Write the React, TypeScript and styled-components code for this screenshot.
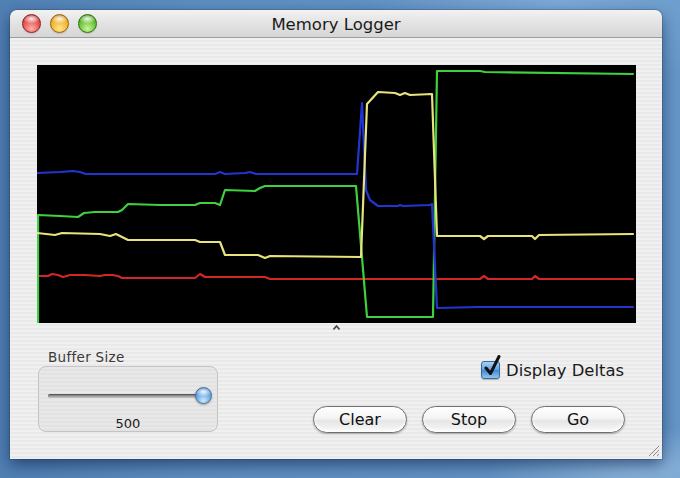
import React from "react";
import styled, { createGlobalStyle } from "styled-components";

const GlobalStyle = createGlobalStyle`
  html, body { margin: 0; padding: 0; }
  body {
    font-family: "DejaVu Sans", "Liberation Sans", sans-serif;
    background: #5f8fc1;
  }
`;

const Desktop = styled.div`
  position: relative;
  width: 680px;
  height: 478px;
  overflow: hidden;
  box-sizing: border-box;
  padding: 10px 18px 0 10px;
  background:
    radial-gradient(ellipse 220px 60px at 640px 470px, rgba(170, 205, 235, 0.55), rgba(170, 205, 235, 0) 70%),
    radial-gradient(ellipse 260px 120px at 560px 0px, rgba(140, 185, 228, 0.6), rgba(140, 185, 228, 0) 75%),
    linear-gradient(90deg, #5080b4 0%, #5e8ec0 30%, #6596c7 100%);
`;

const Window = styled.div`
  position: relative;
  width: 652px;
  height: 449px;
  display: flex;
  flex-direction: column;
  border-radius: 7px 7px 0 0;
  overflow: hidden;
  box-shadow: 0 6px 16px rgba(0, 20, 60, 0.55), 0 0 0 1px rgba(40, 60, 90, 0.25);
`;

const TitleBar = styled.div`
  height: 27px;
  flex: none;
  display: grid;
  grid-template-columns: 1fr auto 1fr;
  align-items: center;
  background: linear-gradient(180deg, #f2f2f2 0%, #e4e4e4 45%, #d6d6d6 100%);
  border-bottom: 1px solid #9c9c9c;
`;

const Lights = styled.div`
  display: flex;
  gap: 9px;
  align-items: center;
  padding-left: 12px;
`;

const Light = styled.div<{ $base: string; $dark: string; $hi: string }>`
  width: 19px;
  height: 19px;
  border-radius: 50%;
  box-sizing: border-box;
  border: 1px solid ${(p) => p.$dark};
  background:
    radial-gradient(ellipse 9px 5px at 50% 22%, rgba(255, 255, 255, 0.9), rgba(255, 255, 255, 0) 100%),
    radial-gradient(circle at 50% 80%, ${(p) => p.$hi} 0%, ${(p) => p.$base} 60%, ${(p) => p.$dark} 100%);
  box-shadow: 0 1px 1px rgba(0, 0, 0, 0.15);
`;

const Title = styled.div`
  font-size: 16.5px;
  color: #1a1a1a;
  padding-top: 1px;
`;

const Body = styled.div`
  flex: 1;
  display: flex;
  flex-direction: column;
  padding: 27px 26px 0 27px;
  background: repeating-linear-gradient(
    180deg,
    #f0f0f0 0px,
    #f0f0f0 2px,
    #e9e9e9 2px,
    #e9e9e9 4px
  );
`;

const Chart = styled.svg`
  display: block;
  width: 599px;
  height: 258px;
  background: #000;
  flex: none;
`;

const Handle = styled.div`
  height: 22px;
  display: flex;
  justify-content: center;
  padding-top: 2px;
  box-sizing: border-box;
`;

const Controls = styled.div`
  display: flex;
  justify-content: space-between;
  padding-right: 11px;
`;

const LeftCol = styled.div`
  display: flex;
  flex-direction: column;
  padding-left: 1px;
  padding-top: 4px;
`;

const GroupLabel = styled.div`
  font-size: 13.5px;
  line-height: 16px;
  color: #3a3a3a;
  padding-left: 10px;
  margin-bottom: 1px;
  letter-spacing: 0.3px;
`;

const GroupBox = styled.div`
  width: 180px;
  height: 66px;
  box-sizing: border-box;
  border: 1px solid #c4c4c4;
  border-radius: 8px;
  background: repeating-linear-gradient(180deg, #e8e8e8 0, #e8e8e8 2px, #e2e2e2 2px, #e2e2e2 4px);
  display: flex;
  flex-direction: column;
  align-items: center;
  padding: 20px 0 0 6px;
  gap: 11px;
`;

const SliderRow = styled.div`
  position: relative;
  width: 166px;
  height: 18px;
  display: flex;
  align-items: center;
`;

const Track = styled.div`
  width: 158px;
  height: 4px;
  border-radius: 2px;
  background: linear-gradient(180deg, #777 0%, #9a9a9a 50%, #c8c8c8 100%);
  box-shadow: inset 0 1px 1px rgba(0, 0, 0, 0.35);
`;

const Knob = styled.div`
  position: absolute;
  left: 147px;
  top: 0;
  width: 17px;
  height: 17px;
  border-radius: 50%;
  box-sizing: border-box;
  border: 1px solid #4a6f9a;
  background:
    radial-gradient(ellipse 9px 5px at 50% 25%, rgba(255, 255, 255, 0.95), rgba(255, 255, 255, 0) 100%),
    radial-gradient(circle at 50% 85%, #c8ecff 0%, #6ba9e6 50%, #2d6cc0 100%);
  box-shadow: 0 1px 2px rgba(0, 0, 0, 0.35);
`;

const Value = styled.div`
  font-size: 13px;
  color: #1a1a1a;
  padding-right: 6px;
`;

const RightCol = styled.div`
  display: flex;
  flex-direction: column;
  align-items: flex-end;
  padding-top: 15px;
  gap: 26px;
`;

const CheckRow = styled.label`
  display: flex;
  align-items: center;
  gap: 6px;
  font-size: 16.4px;
  color: #1a1a1a;
  height: 20px;
  margin-right: 1px;
`;

const CheckBox = styled.span`
  position: relative;
  width: 19px;
  height: 18px;
  box-sizing: border-box;
  border: 1px solid #3f6592;
  border-radius: 3px;
  background: linear-gradient(180deg, #a8d2f6 0%, #5d9fe0 50%, #3f86d6 51%, #8fc6f2 100%);
  box-shadow: 0 1px 1px rgba(0, 0, 0, 0.25);
`;

const CheckMark = styled.svg`
  position: absolute;
  left: 1px;
  top: -7px;
  width: 18px;
  height: 22px;
`;

const Buttons = styled.div`
  display: flex;
  gap: 15px;
`;

const Button = styled.button`
  width: 94px;
  height: 27px;
  box-sizing: border-box;
  border: 1px solid #6f6f6f;
  border-radius: 14px;
  font-family: "DejaVu Sans", "Liberation Sans", sans-serif;
  font-size: 16px;
  color: #111;
  padding: 0 0 1px;
  background: linear-gradient(180deg, #ffffff 0%, #f4f4f4 45%, #e6e6e6 55%, #f8f8f8 100%);
  box-shadow: 0 1px 2px rgba(0, 0, 0, 0.3), inset 0 -2px 3px rgba(255, 255, 255, 0.9);
`;

const Grip = styled.svg`
  position: absolute;
  right: 2px;
  bottom: 2px;
  width: 13px;
  height: 13px;
`;

type Pt = [number, number];

const blue: Pt[] = [
  [0, 108], [23, 107], [36, 106], [43, 107], [49, 109], [163, 109], [178, 109], [183, 107],
  [188, 109], [208, 108], [213, 107], [219, 109], [320, 109], [325, 38], [329, 125], [333, 135],
  [341, 141], [361, 141], [363, 140], [366, 141], [393, 140], [395, 139], [400, 243], [443, 242],
  [596, 242],
];

const green: Pt[] = [
  [1, 258], [1, 150], [23, 151], [41, 152], [47, 148], [58, 147], [81, 147], [85, 145], [91, 139],
  [123, 140], [158, 140], [163, 138], [178, 138], [183, 140], [188, 125], [218, 126], [223, 123],
  [228, 121], [319, 121], [330, 252], [396, 252], [400, 6], [443, 6], [448, 7], [596, 9],
];

const yellow: Pt[] = [
  [0, 168], [18, 170], [25, 168], [63, 169], [73, 171], [79, 169], [83, 171], [91, 175],
  [158, 175], [163, 177], [183, 177], [188, 190], [221, 190], [228, 193], [233, 191], [324, 192],
  [330, 39], [341, 27], [358, 28], [363, 30], [368, 28], [373, 30], [395, 29], [400, 171],
  [443, 171], [447, 174], [451, 171], [495, 171], [498, 174], [502, 170], [596, 169],
];

const red: Pt[] = [
  [0, 211], [11, 211], [15, 209], [21, 210], [26, 212], [33, 210], [48, 210], [63, 211], [68, 210],
  [75, 210], [81, 211], [85, 213], [158, 213], [163, 209], [168, 212], [228, 212], [233, 214],
  [443, 214], [447, 211], [451, 214], [495, 214], [498, 211], [502, 214], [596, 214],
];

const series: { pts: Pt[]; color: string }[] = [
  { pts: red, color: "#d42626" },
  { pts: green, color: "#3fd03f" },
  { pts: blue, color: "#2235d2" },
  { pts: yellow, color: "#e8e37c" },
];

const toPoints = (pts: Pt[]) => pts.map(([x, y]) => `${x},${y}`).join(" ");

export default function App() {
  return (
    <>
      <GlobalStyle />
      <Desktop>
        <Window>
          <TitleBar>
            <Lights>
              <Light $base="#e24a4a" $dark="#8e1f1f" $hi="#ffb0a8" />
              <Light $base="#f0b028" $dark="#9a6300" $hi="#ffe58a" />
              <Light $base="#5fbd2c" $dark="#2f6e10" $hi="#c8f59a" />
            </Lights>
            <Title>Memory Logger</Title>
            <div />
          </TitleBar>
          <Body>
            <Chart viewBox="0 0 599 258">
              {series.map((s, i) => (
                <polyline
                  key={i}
                  points={toPoints(s.pts)}
                  fill="none"
                  stroke={s.color}
                  strokeWidth={2.2}
                  strokeLinejoin="round"
                  strokeLinecap="round"
                />
              ))}
            </Chart>
            <Handle>
              <svg width="7" height="5" viewBox="0 0 7 5">
                <path d="M0.5 4.5 L3.5 1 L6.5 4.5" fill="none" stroke="#444" strokeWidth="1.6" />
              </svg>
            </Handle>
            <Controls>
              <LeftCol>
                <GroupLabel>Buffer Size</GroupLabel>
                <GroupBox>
                  <SliderRow>
                    <Track />
                    <Knob />
                  </SliderRow>
                  <Value>500</Value>
                </GroupBox>
              </LeftCol>
              <RightCol>
                <CheckRow>
                  <CheckBox>
                    <CheckMark viewBox="0 0 18 22">
                      <path
                        d="M3 13 L7.5 18.5 L16 1.5"
                        fill="none"
                        stroke="#111"
                        strokeWidth="3"
                        strokeLinecap="round"
                        strokeLinejoin="round"
                      />
                    </CheckMark>
                  </CheckBox>
                  Display Deltas
                </CheckRow>
                <Buttons>
                  <Button>Clear</Button>
                  <Button>Stop</Button>
                  <Button>Go</Button>
                </Buttons>
              </RightCol>
            </Controls>
          </Body>
          <Grip viewBox="0 0 13 13">
            <path d="M12 2 L2 12 M12 6 L6 12 M12 10 L10 12" stroke="#8a8a8a" strokeWidth="1" />
          </Grip>
        </Window>
      </Desktop>
    </>
  );
}
